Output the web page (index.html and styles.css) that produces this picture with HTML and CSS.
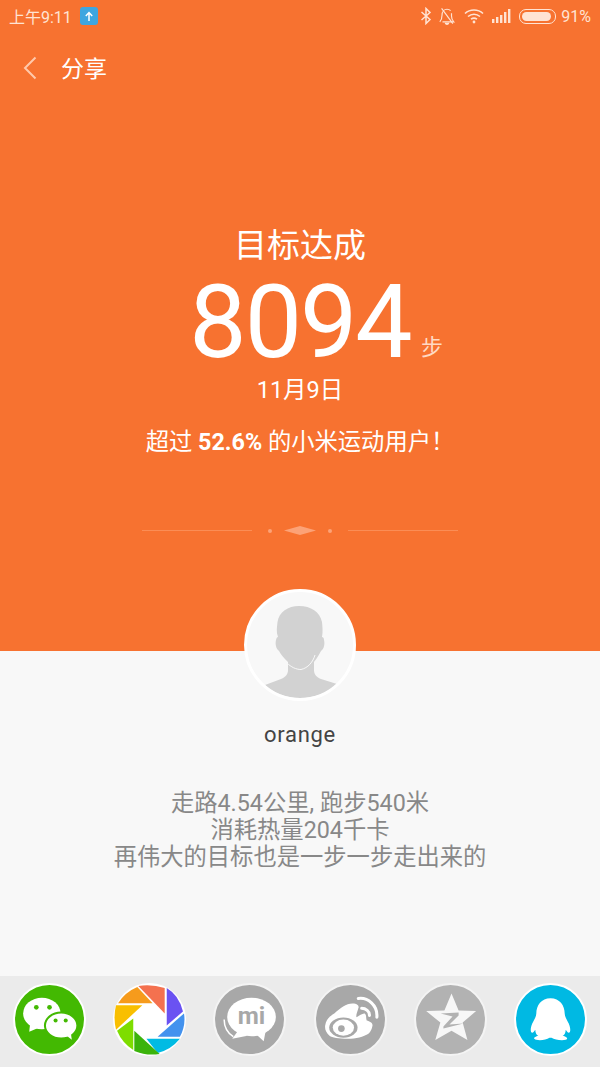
FILE: index.html
```html
<!DOCTYPE html>
<html lang="zh-CN">
<head>
    <meta charset="UTF-8">
    <title>分享</title>
    <link rel="stylesheet" href="styles.css">
</head>
<body>

<div class="page">
    <section class="top">
        <div class="status-bar">
            <div class="status-left">
                <span>上午9:11</span>
                <svg class="upload-badge" width="18" height="18" viewBox="0 0 18 18">
                    <rect width="18" height="18" rx="3" fill="#3ea6e0"/>
                    <path d="M9 14V6M5.800 9 9 5.600 12.200 9" fill="none" stroke="#fff" stroke-width="1.500"/>
                </svg>
            </div>
            <div class="status-right">
                <svg class="bluetooth" width="12" height="18" viewBox="0 0 12 18" fill="none" stroke="#ffe3d3" stroke-width="1.500">
                    <path d="M1.500 5 10 12.500 6 16.500V1.500L10 5.500 1.500 13"/>
                </svg>
                <svg class="bell" width="18" height="18" viewBox="0 0 20 20" fill="none" stroke="#ffe3d3" stroke-width="1.300">
                    <path d="M2 16.500C4 14.500 4.500 12 4.500 9 4.500 5 7 2.500 10 2.500 11.500 2.500 13 3 14 4M15 7V10C15 12.500 16 15 17.500 16.500H5"/>
                    <path d="M4 1.500 16.500 18.500"/>
                    <path d="M8 17.500C8 19.800 12 19.800 12 17.500" fill="#ffe3d3"/>
                </svg>
                <svg class="wifi" width="20" height="16" viewBox="0 0 20 16" fill="none" stroke="#ffe3d3" stroke-width="1.600">
                    <path d="M1 5.500C6 .8 14 .8 19 5.500M4 8.500C7.500 5.400 12.500 5.400 16 8.500M7 11.200C8.800 9.900 11.200 9.900 13 11.200"/>
                    <circle cx="10" cy="14" r="1.400" fill="#ffe3d3" stroke="none"/>
                </svg>
                <svg class="signal" width="19" height="14" viewBox="0 0 19 14" fill="#ffe3d3">
                    <rect x="0" y="10" width="2.400" height="4"/>
                    <rect x="4" y="8" width="2.400" height="6"/>
                    <rect x="8" y="6" width="2.400" height="8"/>
                    <rect x="12" y="3" width="2.400" height="11"/>
                    <rect x="16" y="0" width="2.400" height="14"/>
                </svg>
                <div class="battery"><div class="battery-fill"></div></div>
                <span class="battery-text">91%</span>
            </div>
        </div>

        <header class="nav">
            <svg class="back" width="14" height="24" viewBox="0 0 14 24" fill="none" stroke="#ffc9ab" stroke-width="2">
                <path d="M12.500 1.500 2 12 12.500 22.500"/>
            </svg>
            <span class="nav-title">分享</span>
        </header>

        <div class="goal">
            <h1 class="goal-title">目标达成</h1>
            <div class="steps">
                <span class="steps-num">8094</span>
                <span class="steps-unit">步</span>
            </div>
            <div class="goal-date">11月9日</div>
            <p class="goal-rank">超过 <b>52.6%</b> 的小米运动用户！</p>
        </div>

        <div class="divider">
            <span class="divider-line"></span>
            <span class="divider-dot"></span>
            <span class="divider-diamond"></span>
            <span class="divider-dot"></span>
            <span class="divider-line"></span>
        </div>

        <div class="avatar">
            <svg width="106" height="106" viewBox="0 0 106 106">
                <path fill="#d2d2d2" d="M18 93 34 87C39 85 41 82 41 78V70C37 66 34 63 32 59 29 57 28 52 29 48 29.500 46 30 45 31 45 29 40 30 35 30.500 30 32 20 41 14 52 14 64 14 73 20 75 30 75.500 35 76 40 75 45 76 45 77 46 77 48 78 52 77 57 74 59 72 63 70 66 67 70V78C67 82 69 85 74 87L90 92C80 101 67 106 53 106 39 106 27 101 18 93Z"/>
                <path fill="none" stroke="#f8f8f8" stroke-width="1" d="M40 71C44 75 49 77.500 54 77.500 61 76 66 70 68 63"/>
            </svg>
        </div>
    </section>

    <section class="bottom">
        <div class="username">orange</div>
        <p class="summary">走路4.54公里, 跑步540米<br>消耗热量204千卡<br>再伟大的目标也是一步一步走出来的</p>
    </section>

    <footer class="share-bar">
        <svg class="share-icon" width="73" height="73" viewBox="0 0 72 72">
            <circle cx="36" cy="36" r="35" fill="#43b902" stroke="#fff" stroke-width="2"/>
            <ellipse cx="28.500" cy="30" rx="18.500" ry="15.500" fill="#fff"/>
            <path d="M17 39 16 48 26 44Z" fill="#fff"/>
            <ellipse cx="47.500" cy="42" rx="16" ry="12.800" fill="#fff" stroke="#43b902" stroke-width="2"/>
            <path d="M53 52 58 56 57 49Z" fill="#fff"/>
            <circle cx="23" cy="24" r="2.300" fill="#43b902"/>
            <circle cx="36" cy="24" r="2.300" fill="#43b902"/>
            <circle cx="42" cy="37" r="2" fill="#43b902"/>
            <circle cx="52" cy="37" r="2" fill="#43b902"/>
        </svg>
        <svg class="share-icon" width="73" height="73" viewBox="0 0 72 72">
            <circle cx="36" cy="36" r="36" fill="#fff"/>
            <path fill="#f4714f" d="M25 3Q38 1 51 5V30Z"/>
            <path fill="#6a52f2" d="M53 5Q65 12 69 28L53 42Z"/>
            <path fill="#4392ee" d="M70 30Q72 42 66 53H44Z"/>
            <path fill="#00bbe3" d="M33 55H66Q57 66 44 69Z"/>
            <path fill="#3bb30b" d="M21 47 46 70Q33 72 21 67Z"/>
            <path fill="#7edd00" d="M20 35V66Q9 59 4 47Z"/>
            <path fill="#f9bf00" d="M3 22H29L3 46Q0 34 3 22Z"/>
            <path fill="#f69b1c" d="M24 4 39 20H5Q12 9 24 4Z"/>
        </svg>
        <svg class="share-icon" width="73" height="73" viewBox="0 0 72 72">
            <circle cx="36" cy="36" r="35" fill="#a8a8a8" stroke="#f4f4f4" stroke-width="2"/>
            <ellipse cx="38" cy="33.500" rx="24" ry="19" fill="#fff"/>
            <path d="M24 48 19 55 34 52Z" fill="#fff"/>
            <path d="M42 50 50 57.500 52 47Z" fill="#fff"/>
            <path d="M11 36C11 43 14 49 20 53" fill="none" stroke="#fff" stroke-width="1.500"/>
            <text class="mi-text" x="38" y="40" text-anchor="middle">mi</text>
        </svg>
        <svg class="share-icon" width="73" height="73" viewBox="0 0 72 72">
            <circle cx="36" cy="36" r="35" fill="#a8a8a8" stroke="#f4f4f4" stroke-width="2"/>
            <path fill="#fff" d="M11 42C12 36 15 33 20 30 26 25 32 20 38.500 20.300 42 20.500 45 22 43.700 25 43 28 41 32 42 33.700 45 32 49 29 50.300 30.300 52 32 51 34 52 37 55 38 58 39 57.700 42 57 47 54 50 53.700 50 49 53 41 55 33.700 55 24 55 18 54 15.300 52 12 49 10.500 46 11 42Z"/>
            <ellipse cx="29" cy="44" rx="14" ry="10" fill="#a8a8a8"/>
            <ellipse cx="29" cy="44" rx="10.500" ry="8" fill="#fff"/>
            <circle cx="27" cy="45" r="3.300" fill="#a8a8a8"/>
            <path d="M47 25C51 25 55 28 54.700 32M43.700 15.300C53 14 63 22 62 33.700" fill="none" stroke="#fff" stroke-width="3" stroke-linecap="round"/>
        </svg>
        <svg class="share-icon" width="73" height="73" viewBox="0 0 72 72">
            <circle cx="36" cy="36" r="35" fill="#b2b2b2" stroke="#f4f4f4" stroke-width="2"/>
            <path fill="#f7f7f7" d="M37 10.300 44 27 61.300 27.700 48 39 52.700 56.300 37 47 21 56.300 26 39 12 27.700 30 27Z"/>
            <path fill="#b2b2b2" d="M26.300 30 44 29V32L35 41 48.700 40 29 45V43L38 33Z"/>
        </svg>
        <svg class="share-icon" width="73" height="73" viewBox="0 0 72 72">
            <circle cx="36" cy="36" r="35" fill="#00b9e3" stroke="#fff" stroke-width="2"/>
            <path fill="#fff" d="M36 15C45 15 50 22 50 30 50 33 52 36 54 40 56 45 56 49 54 49 53 49 52 47 51 46 51 49 50 51 48 52 52 53 54 55 51 56 47 57 40 56 37 54H35C32 56 26 57 22 56 18 55 20 53 24 52 22 51 21 49 21 46 20 47 19 49 18 49 16 49 16 45 18 40 20 36 22 33 22 30 22 22 27 15 36 15Z"/>
        </svg>
    </footer>
</div>

</body>
</html>
```

FILE: styles.css
```css
* {
    box-sizing: border-box;
}
body {
    margin: 0;
    font-family: Roboto, "Noto Sans CJK SC", sans-serif;
}
.page {
    width: 600px;
    height: 1067px;
    display: flex;
    flex-direction: column;
    overflow: hidden;
}
.top {
    position: relative;
    height: 651px;
    flex: none;
    background-color: #f77230;
    color: #fff;
}
.status-bar {
    height: 32px;
    padding: 0 9px;
    display: flex;
    justify-content: space-between;
    align-items: center;
    font-size: 16px;
    color: #ffe3d3;
}
.status-left {
    display: flex;
    align-items: center;
    gap: 8px;
}
.status-right {
    display: flex;
    align-items: center;
    gap: 8px;
}
.bell {
    margin-left: -2px;
}
.battery-text {
    margin-left: -3px;
}
.battery {
    width: 37px;
    height: 15px;
    padding: 2px;
    border: 1px solid #ffe3d3;
    border-radius: 7px;
}
.battery-fill {
    width: 91%;
    height: 100%;
    border-radius: 5px;
    background-color: #ffe3d3;
}
.nav {
    height: 72px;
    padding-left: 23px;
    display: flex;
    align-items: center;
    gap: 24px;
}
.nav-title {
    font-size: 23px;
    margin-top: -2px;
}
.goal {
    padding-top: 120px;
    text-align: center;
}
.goal-title {
    margin: 0;
    font-size: 33px;
    font-weight: 400;
    line-height: 44px;
}
.steps {
    margin-top: 4px;
    height: 100px;
    display: flex;
    justify-content: center;
    position: relative;
}
.steps-num {
    font-weight: 400;
    font-size: 102px;
    line-height: 100px;
    letter-spacing: -2px;
}
.steps-unit {
    position: absolute;
    left: 421px;
    top: 61px;
    font-size: 22px;
    line-height: 30px;
    color: #ffd9c3;
}
.goal-date {
    margin-top: 3px;
    font-size: 23.500px;
    line-height: 30px;
}
.goal-rank {
    margin: 22px 0 0;
    font-size: 23.300px;
    line-height: 30px;
}
.divider {
    margin-top: 69px;
    display: flex;
    justify-content: center;
    align-items: center;
    gap: 12px;
}
.divider-line {
    width: 110px;
    height: 1px;
    background-color: #fb8d55;
}
.divider-line:first-child {
    margin-right: 4px;
}
.divider-line:last-child {
    margin-left: 4px;
}
.divider-dot {
    width: 4px;
    height: 4px;
    border-radius: 50%;
    background-color: #fca277;
}
.divider-diamond {
    width: 32px;
    height: 9px;
    background-color: #fca277;
    clip-path: polygon(0 50%, 50% 0, 100% 50%, 50% 100%);
}
.avatar {
    position: absolute;
    left: 244px;
    top: 589px;
    width: 112px;
    height: 112px;
    border: 3px solid #fff;
    border-radius: 50%;
    background-color: #f8f8f8;
    overflow: hidden;
    z-index: 1;
}
.bottom {
    flex: 1;
    background-color: #f8f8f8;
    text-align: center;
}
.username {
    margin-top: 68px;
    font-size: 22px;
    line-height: 32px;
    letter-spacing: 0.7px;
    color: #444;
}
.summary {
    margin: 39px 0 0;
    font-size: 23.300px;
    line-height: 27px;
    color: #888;
}
.share-bar {
    height: 91px;
    flex: none;
    padding: 7px 13px 0;
    display: flex;
    justify-content: space-between;
    align-items: flex-start;
    background-color: #ebebeb;
}
.share-icon {
    display: block;
}
.mi-text {
    font-family: Roboto, sans-serif;
    font-size: 24px;
    font-weight: 700;
    fill: #a8a8a8;
}
```
